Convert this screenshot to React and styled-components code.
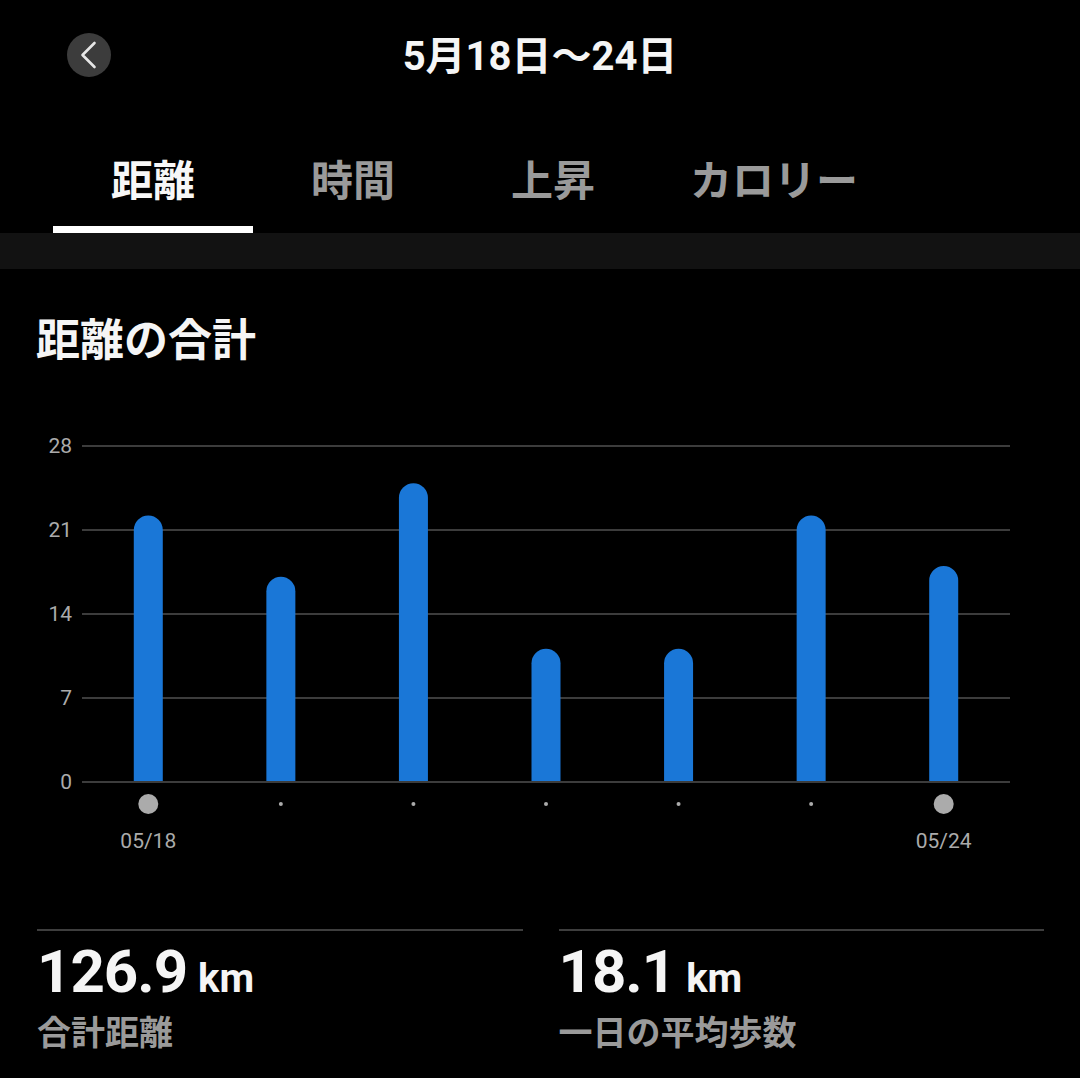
import React from "react";
import styled, { createGlobalStyle } from "styled-components";

const Global = createGlobalStyle`
  html, body { margin: 0; padding: 0; background: #000; }
  body { font-family: Roboto, "Noto Sans CJK JP", sans-serif; }
  * { box-sizing: border-box; }
`;

const Page = styled.div`
  width: 1080px;
  height: 1078px;
  overflow: hidden;
  background: #000;
  color: #fff;
  display: flex;
  flex-direction: column;
`;

const Header = styled.header`
  height: 112px;
  display: grid;
  grid-template-columns: 1fr auto 1fr;
  align-items: center;
  padding: 0 67px;
`;

const BackButton = styled.button`
  width: 44px;
  height: 44px;
  border-radius: 50%;
  border: none;
  padding: 0;
  background: #3c3c3c;
  display: flex;
  align-items: center;
  justify-content: center;
  justify-self: start;
  margin-top: -2px;
`;

const Title = styled.h1`
  margin: 2px 0 0;
  font-size: 40px;
  font-weight: 700;
  line-height: 1;
  color: #f5f5f5;
`;

const TabBar = styled.nav`
  display: flex;
  padding-left: 53px;
  height: 121px;
`;

const Tab = styled.div`
  min-width: 200px;
  padding: 16px 37px 0;
  height: 121px;
  display: flex;
  align-items: center;
  justify-content: center;
  font-size: 42px;
  font-weight: 700;
  color: ${(p) => (p.$active ? "#f7f7f7" : "#9a9a9a")};
  border-bottom: 7px solid ${(p) => (p.$active ? "#ffffff" : "transparent")};
`;

const Band = styled.div`
  height: 36px;
  background: #121212;
`;

const SectionTitle = styled.h2`
  margin: 46px 0 0 36px;
  font-size: 44px;
  font-weight: 700;
  line-height: 1.2;
  color: #f5f5f5;
`;

const ChartWrap = styled.div`
  margin-top: 52px;
  height: 440px;
`;

const Stats = styled.div`
  margin-top: 69px;
  padding: 0 36px 0 37px;
  display: grid;
  grid-template-columns: 1fr 1fr;
  column-gap: 36px;
`;

const Stat = styled.div`
  border-top: 2px solid #3e3e3e;
  padding-top: 11px;
`;

const Value = styled.div`
  font-size: 60px;
  font-weight: 700;
  line-height: 60px;
  letter-spacing: -1px;
  color: #f5f5f5;
  white-space: nowrap;
`;

const Unit = styled.span`
  font-size: 40px;
  letter-spacing: 0;
  margin-left: 11px;
`;

const Label = styled.div`
  margin-top: 4px;
  font-size: 34px;
  font-weight: 700;
  line-height: 1.2;
  color: #9a9a9a;
`;

const data = [22.2, 17.1, 24.9, 11.1, 11.1, 22.2, 18.0];
const ticks = [28, 21, 14, 7, 0];

function Chart() {
  const x0 = 82;
  const x1 = 1010;
  const yTop = 26;
  const yBase = 362;
  const perUnit = (yBase - yTop) / 28;
  const colW = (x1 - x0) / 7;
  const barW = 29;
  return (
    <svg width="1080" height="440" viewBox="0 0 1080 440">
      {ticks.map((t) => {
        const y = yBase - t * perUnit;
        return (
          <g key={t}>
            <line x1={x0} x2={x1} y1={y} y2={y} stroke="#3c3c3c" strokeWidth="2" />
            <text
              x="72"
              y={y}
              textAnchor="end"
              dominantBaseline="central"
              fill="#ababab"
              fontSize="21"
              fontFamily="Roboto, sans-serif"
            >
              {t}
            </text>
          </g>
        );
      })}
      {data.map((v, i) => {
        const cx = x0 + colW * (i + 0.5);
        const top = yBase - v * perUnit;
        const r = barW / 2;
        const l = cx - r;
        const rr = cx + r;
        const d = `M${l},${yBase - 1} L${l},${top + r} A${r},${r} 0 0 1 ${rr},${top + r} L${rr},${yBase - 1} Z`;
        const edge = i === 0 || i === data.length - 1;
        return (
          <g key={i}>
            <path d={d} fill="#1a77d7" />
            <circle cx={cx} cy="384" r={edge ? 10 : 2} fill="#ababab" />
          </g>
        );
      })}
      <text x={x0 + colW * 0.5} y="421" textAnchor="middle" dominantBaseline="central" fill="#ababab" fontSize="21" fontFamily="Roboto, sans-serif">
        05/18
      </text>
      <text x={x0 + colW * 6.5} y="421" textAnchor="middle" dominantBaseline="central" fill="#ababab" fontSize="21" fontFamily="Roboto, sans-serif">
        05/24
      </text>
    </svg>
  );
}

export default function App() {
  const tabs = ["距離", "時間", "上昇", "カロリー"];
  return (
    <>
      <Global />
      <Page>
        <Header>
          <BackButton aria-label="戻る">
            <svg width="44" height="44" viewBox="0 0 44 44">
              <path d="M27.5 10 L15.5 22 L27.5 34" fill="none" stroke="#e6e6e6" strokeWidth="2.6" strokeLinecap="round" strokeLinejoin="round" />
            </svg>
          </BackButton>
          <Title>5月18日～24日</Title>
          <div />
        </Header>
        <TabBar>
          {tabs.map((t, i) => (
            <Tab key={t} $active={i === 0}>
              {t}
            </Tab>
          ))}
        </TabBar>
        <Band />
        <SectionTitle>距離の合計</SectionTitle>
        <ChartWrap>
          <Chart />
        </ChartWrap>
        <Stats>
          <Stat>
            <Value>
              126.9<Unit>km</Unit>
            </Value>
            <Label>合計距離</Label>
          </Stat>
          <Stat>
            <Value>
              18.1<Unit>km</Unit>
            </Value>
            <Label>一日の平均歩数</Label>
          </Stat>
        </Stats>
      </Page>
    </>
  );
}
